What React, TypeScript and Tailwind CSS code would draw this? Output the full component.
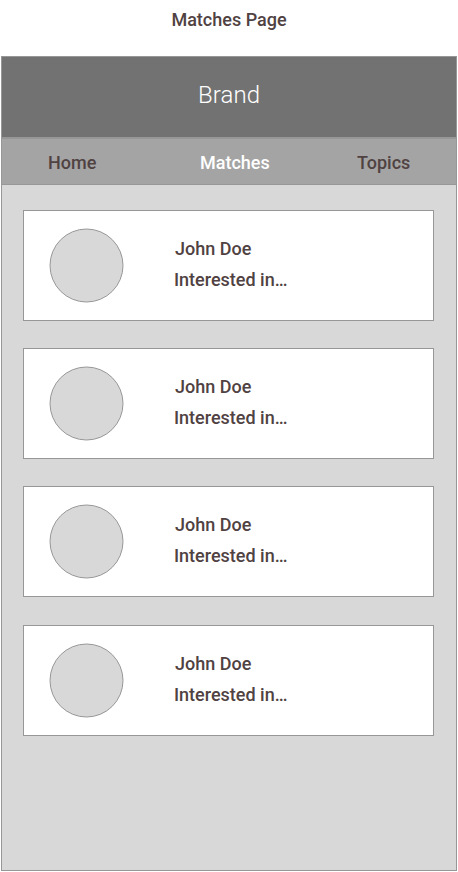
const gaps = ["mt-[25px]", "mt-[27px]", "mt-[27px]", "mt-[28px]"];

function MatchCard({ gap }: { gap: string }) {
  return (
    <article className={`${gap} flex h-[111px] w-[411px] shrink-0 border border-[#979797] bg-white`}>
      <svg className="mt-[17px] ml-[25px] size-[75px] shrink-0" viewBox="0 0 75 75" aria-hidden="true">
        <circle cx="37.5" cy="37.5" r="36.5" fill="#d8d8d8" stroke="#979797" />
      </svg>
      <div className="mt-[22px] ml-[50px] text-[18px] leading-[31px] font-medium">
        <p className="ml-px">John Doe</p>
        <p>Interested in…</p>
      </div>
    </article>
  );
}

export default function App() {
  return (
    <div className="h-[872px] w-[458px] overflow-hidden bg-white font-['Roboto',sans-serif] text-[#504242]">
      <h1 className="h-14 pt-[6px] text-center text-[18px] leading-[28px] font-medium">Matches Page</h1>
      <main className="ml-px flex h-[815px] w-[456px] flex-col border border-[#979797] bg-[#d8d8d8]">
        <header className="flex h-[80px] shrink-0 items-center justify-center bg-[#727272] pb-1 text-[24px] font-light tracking-[0.1px] text-white">Brand</header>
        <nav className="flex h-[48px] shrink-0 border-t-2 border-b border-[#979797] bg-[#a4a4a4] text-[18px] leading-[48px] font-medium">
          <a className="ml-[46px] w-[152px]">Home</a>
          <a className="w-[157px] text-white">Matches</a>
          <a>Topics</a>
        </nav>
        <section className="ml-[21px]">
          {gaps.map((gap, i) => <MatchCard key={i} gap={gap} />)}
        </section>
      </main>
    </div>
  );
}
